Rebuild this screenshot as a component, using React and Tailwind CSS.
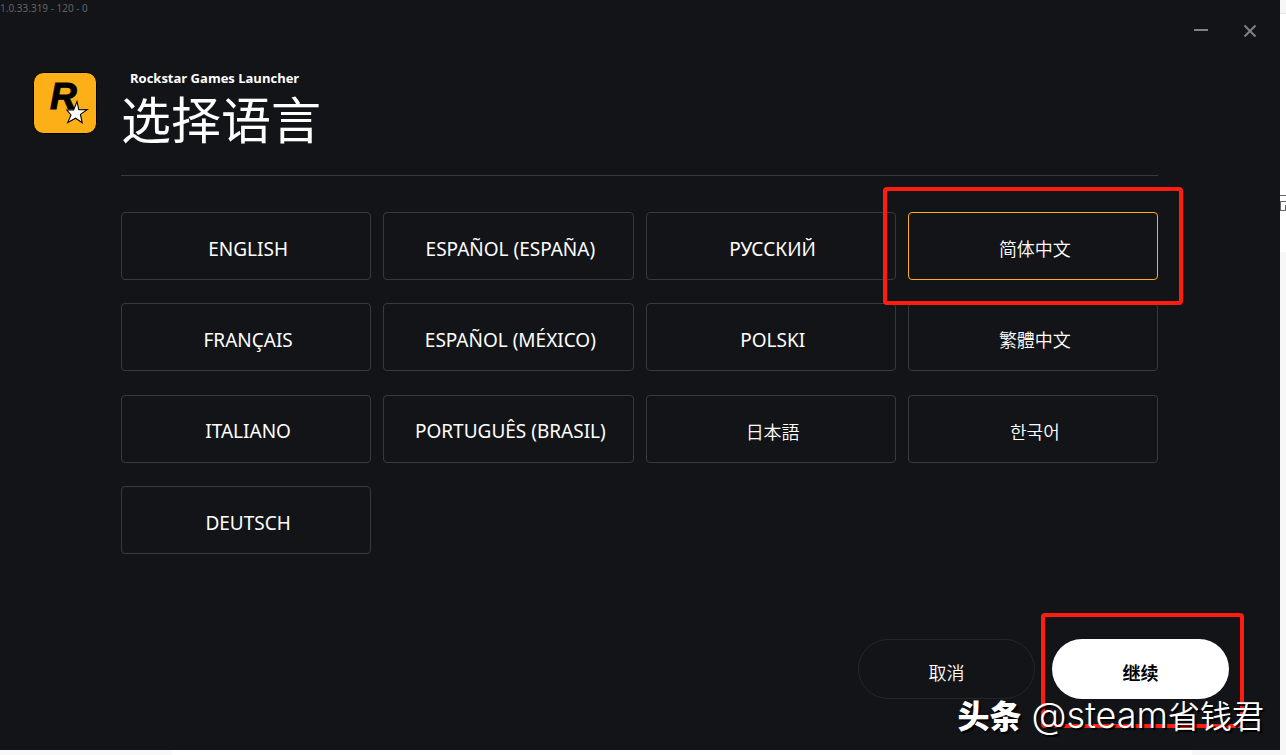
import { useState } from 'react';

const languages = [
  { code: 'en', label: 'ENGLISH' },
  { code: 'es', label: 'ESPAÑOL (ESPAÑA)' },
  { code: 'ru', label: 'РУССКИЙ' },
  { code: 'zh-CN', label: '简体中文', cjk: true },
  { code: 'fr', label: 'FRANÇAIS' },
  { code: 'es-MX', label: 'ESPAÑOL (MÉXICO)' },
  { code: 'pl', label: 'POLSKI' },
  { code: 'zh-TW', label: '繁體中文', cjk: true },
  { code: 'it', label: 'ITALIANO' },
  { code: 'pt-BR', label: 'PORTUGUÊS (BRASIL)' },
  { code: 'ja', label: '日本語', cjk: true },
  { code: 'ko', label: '한국어', cjk: true },
  { code: 'de', label: 'DEUTSCH' },
];

function Logo() {
  return (
    <svg viewBox="0 0 64 62" className="h-[62px] w-16 shrink-0" aria-hidden="true">
      <rect x="0.5" y="0.5" width="63" height="61" rx="10" fill="#fcaf17" stroke="#000" />
      <text x="17" y="37" fontFamily="Liberation Sans, sans-serif" fontWeight="700" fontStyle="italic" fontSize="37" stroke="#000">R</text>
      <path
        d="M44 29.5 L45.8 37.8 L54.2 37.6 L47.4 42.4 L49.2 50.8 L42.6 46.2 L34.8 50.4 L38 43 L33.8 38 L40.6 38 Z"
        fill="#fff"
        stroke="#000"
        strokeWidth="1.1"
      />
    </svg>
  );
}

function LanguageButton({ language, active, onSelect }) {
  return (
    <div className="relative">
      <button
        lang={language.code}
        onClick={() => onSelect(language.code)}
        className={`flex h-[68px] w-full items-center justify-center rounded border pt-1.5 pl-1 text-white ${language.cjk ? 'text-lg font-[350]' : 'text-[19px]'} ${active ? 'border-[#fcaf17]' : 'border-[#3a3a3c]'}`}
      >
        {language.label}
      </button>
      {active && <div className="pointer-events-none absolute -inset-[25px] z-10 rounded border-4 border-[#ff1c10]" />}
    </div>
  );
}

// the page that shows behind the launcher along its right side
function PageEdge() {
  return (
    <div className="flex w-1.5 shrink-0 flex-col bg-[#f7f7f7]">
      <div className="h-3.5 border-b border-[#e5e5e5]" />
      <div className="h-[238px] bg-white pt-[181px]">
        <svg viewBox="0 0 6 17" className="h-[17px] w-1.5" fill="none" stroke="#666" aria-hidden="true">
          <path d="M0 .5h6M0 6.5h6M0 15.5h6M.5 7v8M5.5 10v5" />
        </svg>
      </div>
    </div>
  );
}

export default function App() {
  const [selected, setSelected] = useState('zh-CN');

  return (
    <div className="flex min-h-screen flex-col bg-white font-['Noto_Sans','Noto_Sans_CJK_SC',sans-serif]">
      <div className="flex grow">
        <main className="flex grow flex-col bg-[#131417]">
          <header className="flex h-[72px] items-start justify-between">
            <span className="text-[10px] leading-4 text-[#626264]">1.0.33.319 - 120 - 0</span>
            <div className="flex gap-7 pt-5 pr-5 text-[#808082]">
              <button aria-label="Minimize" className="flex size-5 items-center justify-center">
                <svg viewBox="0 0 20 20" className="size-5" stroke="currentColor" strokeWidth="2"><path d="M2 10h14" /></svg>
              </button>
              <button aria-label="Close" className="flex size-5 items-center justify-center">
                <svg viewBox="0 0 20 20" className="size-5" stroke="currentColor" strokeWidth="2"><path d="M4.5 5.5l11 11M15.5 5.5l-11 11" /></svg>
              </button>
            </div>
          </header>

          <div className="flex items-start pr-[122px] pl-[33px]">
            <Logo />
            <section className="ml-6 grow">
              <div className="h-[104px] border-b border-[#3a3a3c]">
                <p className="pl-[9px] font-['Open_Sans',sans-serif] text-[13px] leading-3 font-bold text-white">Rockstar Games Launcher</p>
                <h1 className="pt-2 font-['Liberation_Sans','Noto_Sans_CJK_SC',sans-serif] text-[50px] leading-[60px] font-normal text-white">选择语言</h1>
              </div>
              <div className="mt-9 grid h-[342px] grid-cols-4 content-between gap-x-3">
                {languages.map((l) => (
                  <LanguageButton key={l.code} language={l} active={l.code === selected} onSelect={setSelected} />
                ))}
              </div>
            </section>
          </div>

          <footer className="relative mt-auto flex justify-end gap-[17px] pr-[51px] pb-[51px]">
            <button className="h-[60px] w-[177px] rounded-full border border-[#252628] pt-2 text-lg font-[350] text-white">取消</button>
            <div className="relative">
              <button className="h-[60px] w-[177px] rounded-full bg-white pt-2 text-lg font-bold text-black">继续</button>
              <div className="pointer-events-none absolute -top-[26px] -right-[15px] -bottom-[29px] -left-[11px] rounded border-4 border-[#ff1c10]" />
            </div>
            <p className="absolute right-4 bottom-3 flex items-baseline gap-2.5 text-[32px] leading-[46px] whitespace-nowrap text-white [text-shadow:2px_2px_1px_#000]">
              <span className="font-['Noto_Sans_CJK_SC',sans-serif] font-black">头条</span>
              <span className="font-['Noto_Sans_CJK_SC',sans-serif] font-[350]">
                <span className="font-['Inter',sans-serif] text-[36px] font-light">@steam</span>省钱君
              </span>
            </p>
          </footer>
        </main>
        <PageEdge />
      </div>
      <div className="flex h-[5px] shrink-0 justify-between">
        <div className="w-[172px] bg-[#f9f9f9]" />
        <div className="w-[94px] bg-[#f7f7f7]" />
      </div>
    </div>
  );
}
